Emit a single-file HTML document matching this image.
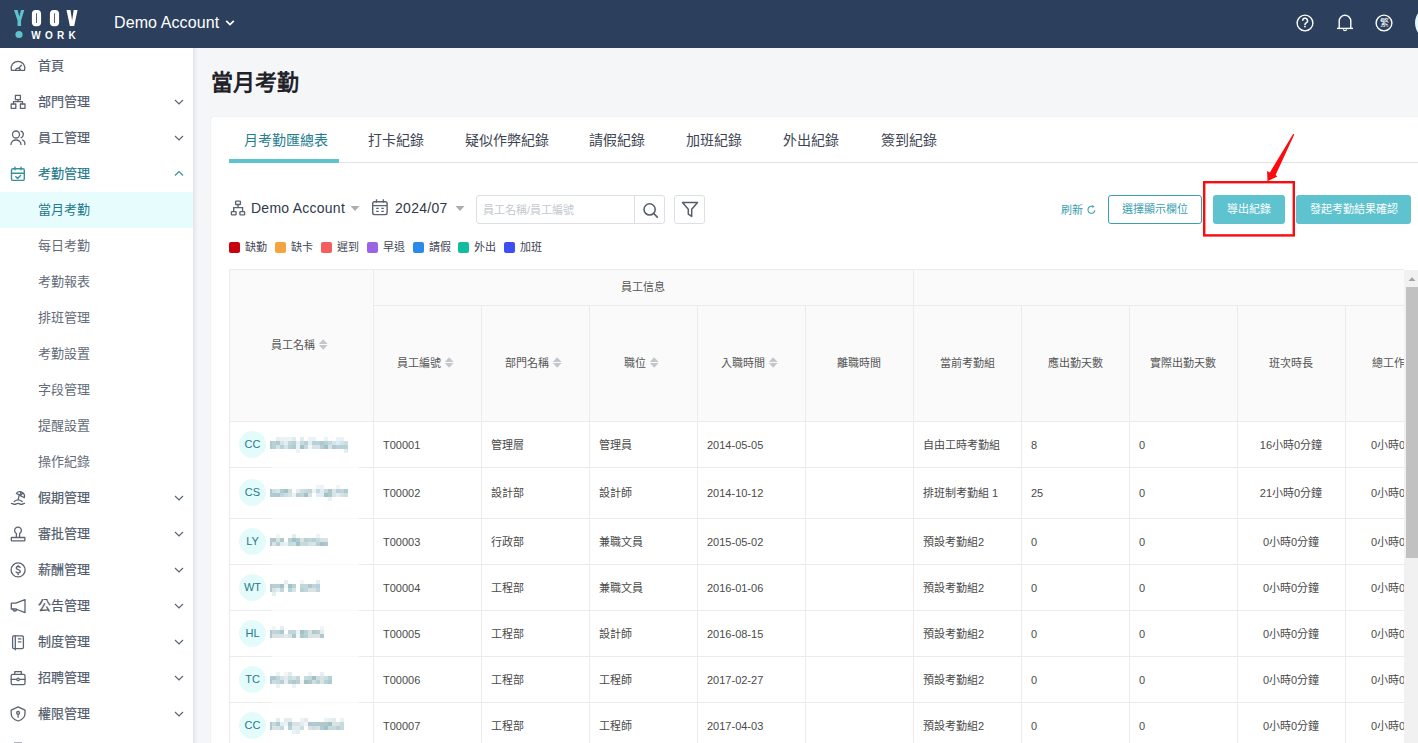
<!DOCTYPE html><html lang="zh-TW"><head><meta charset="utf-8"><style>
*{box-sizing:border-box;margin:0;padding:0}
html,body{width:1418px;height:743px;overflow:hidden}
body{font-family:"Liberation Sans",sans-serif;background:#f5f6f8;position:relative;color:#333}
.abs{position:absolute}
.hdr{position:absolute;left:0;top:0;width:1418px;height:48px;background:#2c3f5c}
.side{position:absolute;left:0;top:48px;width:193px;height:695px;background:#fff}
.sshadow{position:absolute;left:193px;top:48px;width:5px;height:695px;background:linear-gradient(to right,#e3e5e8,#edeef1 50%,#f5f6f8)}
.mi{position:absolute;left:0;width:193px;height:36px;font-size:13px;line-height:36px;color:#646c78;white-space:nowrap}
.mi .t{position:absolute;left:38px;top:0}
.mi.top .t{color:#505a6a;-webkit-text-stroke:0.2px #505a6a}
.mi svg{position:absolute;overflow:visible}
.title{position:absolute;left:211px;top:68px;font-size:22px;font-weight:bold;color:#1f2329;line-height:30px;white-space:nowrap}
.card{position:absolute;left:211px;top:117px;width:1300px;height:700px;background:#fff;border-radius:4px;box-shadow:0 0 2px rgba(0,0,0,.07)}
.tabline{position:absolute;left:229px;top:162px;width:1200px;height:1px;background:#e1e3e8}
.tab{position:absolute;top:131px;font-size:14px;color:#3d4552;line-height:18px;white-space:nowrap}
.tab.act{color:#247e8f}
.uline{position:absolute;left:229px;top:159px;width:110px;height:4px;background:#5ec3ce}
.txt{position:absolute;white-space:nowrap}
.leg{position:absolute;top:242px;width:11px;height:11px;border-radius:2px}
.legt{position:absolute;top:240px;font-size:11px;line-height:14px;color:#3d4552;white-space:nowrap}
.btn{position:absolute;top:195px;height:29px;border-radius:3px;font-size:11px;line-height:29px;text-align:center;white-space:nowrap}
.tb{position:absolute;left:229px;top:269px;width:1175px;height:480px;overflow:hidden}
.cell{position:absolute;font-size:11px;color:#4a4a4a;white-space:nowrap;line-height:14px}
.hl{position:absolute;background:#ebebeb}
</style></head><body>
<div class="hdr">
<svg class="abs" style="left:0;top:0" width="100" height="48" viewBox="0 0 100 48">
<g fill="#5ec3cd"><path d="M14 10h3.6l1.7 6.4 1.7-6.4h3.3l-3.2 10.4V26h-3.6v-5.6z"/><circle cx="19" cy="34.5" r="3.6"/></g>
<g fill="#fff">
<path d="M35.5 10h2c2.2 0 3.6 1.4 3.6 3.8v8.6c0 2.4-1.4 3.8-3.6 3.8h-2c-2.2 0-3.6-1.4-3.6-3.8v-8.6c0-2.4 1.4-3.8 3.6-3.8zm0.6 3.3v9.6h0.8v-9.6z"/>
<path d="M53.5 10h2c2.2 0 3.6 1.4 3.6 3.8v8.6c0 2.4-1.4 3.8-3.6 3.8h-2c-2.2 0-3.6-1.4-3.6-3.8v-8.6c0-2.4 1.4-3.8 3.6-3.8zm0.6 3.3v9.6h0.8v-9.6z"/>
<path d="M66.5 10h4l1.6 10.5 1.6-10.5h3.9l-3.4 16h-4.3z"/>
</g>
<text x="31.2" y="38.8" font-family="Liberation Sans" font-weight="bold" font-size="10" fill="#fff" letter-spacing="4.3">WORK</text>
</svg>
<div class="txt" style="left:114px;top:14px;font-size:16px;line-height:18px;color:#fff;letter-spacing:.1px">Demo Account</div>
<svg class="abs" style="left:225px;top:19px" width="10" height="8"><path d="M1.2 1.8l3.8 3.8 3.8-3.8" fill="none" stroke="#fff" stroke-width="1.7"/></svg>
<svg class="abs" style="left:1290px;top:8px" width="128" height="32" viewBox="1290 8 128 32">
<circle cx="1305" cy="23" r="7.9" fill="none" stroke="#fff" stroke-width="1.4"/>
<path d="M1302.7 20.7a2.4 2.4 0 1 1 3.5 2.1c-.8.5-1.2 1-1.2 1.9v.5" fill="none" stroke="#fff" stroke-width="1.5"/><circle cx="1305" cy="26.6" r=".9" fill="#fff"/>
<path d="M1339.2 28.4v-7.4a5.8 5.8 0 0 1 11.6 0v7.4" fill="none" stroke="#fff" stroke-width="1.4"/>
<path d="M1337 28.4h16" stroke="#fff" stroke-width="1.4"/>
<path d="M1343.5 29.2a1.5 1.5 0 0 0 3 0" fill="none" stroke="#fff" stroke-width="1.2"/>
<circle cx="1384" cy="23" r="7.9" fill="none" stroke="#fff" stroke-width="1.4"/>
<text x="1384" y="26.3" text-anchor="middle" font-size="9" fill="#fff">繁</text>
<circle cx="1432" cy="23" r="17" fill="#e3f8fa"/>
</svg>
</div>
<div class="side"></div><div class="sshadow"></div>
<div class="mi top" style="top:48px"><span class="t" style="top:0px">首頁</span>
</div>
<div class="mi top" style="top:84px"><span class="t" style="top:0px">部門管理</span>
<svg style="left:174px;top:15px" width="10" height="7"><path d="M1 1l4 4 4-4" fill="none" stroke="#5b6472" stroke-width="1.2"/></svg>
</div>
<div class="mi top" style="top:120px"><span class="t" style="top:0px">員工管理</span>
<svg style="left:174px;top:15px" width="10" height="7"><path d="M1 1l4 4 4-4" fill="none" stroke="#5b6472" stroke-width="1.2"/></svg>
</div>
<div class="mi top" style="top:156px"><span class="t" style="top:0px;color:#23798a;-webkit-text-stroke-color:#23798a">考勤管理</span>
<svg style="left:174px;top:14px" width="10" height="7"><path d="M1 5.5l4-4 4 4" fill="none" stroke="#3a8f9c" stroke-width="1.2"/></svg>
</div>
<div class="mi" style="top:192px;background:#e7fdfd"><span class="t" style="top:0px;color:#23798a">當月考勤</span>
</div>
<div class="mi" style="top:228px"><span class="t" style="top:0px">每日考勤</span>
</div>
<div class="mi" style="top:264px"><span class="t" style="top:0px">考勤報表</span>
</div>
<div class="mi" style="top:300px"><span class="t" style="top:0px">排班管理</span>
</div>
<div class="mi" style="top:336px"><span class="t" style="top:0px">考勤設置</span>
</div>
<div class="mi" style="top:372px"><span class="t" style="top:0px">字段管理</span>
</div>
<div class="mi" style="top:408px"><span class="t" style="top:0px">提醒設置</span>
</div>
<div class="mi" style="top:444px"><span class="t" style="top:0px">操作紀錄</span>
</div>
<div class="mi top" style="top:480px"><span class="t" style="top:0px">假期管理</span>
<svg style="left:174px;top:15px" width="10" height="7"><path d="M1 1l4 4 4-4" fill="none" stroke="#5b6472" stroke-width="1.2"/></svg>
</div>
<div class="mi top" style="top:516px"><span class="t" style="top:0px">審批管理</span>
<svg style="left:174px;top:15px" width="10" height="7"><path d="M1 1l4 4 4-4" fill="none" stroke="#5b6472" stroke-width="1.2"/></svg>
</div>
<div class="mi top" style="top:552px"><span class="t" style="top:0px">薪酬管理</span>
<svg style="left:174px;top:15px" width="10" height="7"><path d="M1 1l4 4 4-4" fill="none" stroke="#5b6472" stroke-width="1.2"/></svg>
</div>
<div class="mi top" style="top:588px"><span class="t" style="top:0px">公告管理</span>
<svg style="left:174px;top:15px" width="10" height="7"><path d="M1 1l4 4 4-4" fill="none" stroke="#5b6472" stroke-width="1.2"/></svg>
</div>
<div class="mi top" style="top:624px"><span class="t" style="top:0px">制度管理</span>
<svg style="left:174px;top:15px" width="10" height="7"><path d="M1 1l4 4 4-4" fill="none" stroke="#5b6472" stroke-width="1.2"/></svg>
</div>
<div class="mi top" style="top:660px"><span class="t" style="top:0px">招聘管理</span>
<svg style="left:174px;top:15px" width="10" height="7"><path d="M1 1l4 4 4-4" fill="none" stroke="#5b6472" stroke-width="1.2"/></svg>
</div>
<div class="mi top" style="top:696px"><span class="t" style="top:0px">權限管理</span>
<svg style="left:174px;top:15px" width="10" height="7"><path d="M1 1l4 4 4-4" fill="none" stroke="#5b6472" stroke-width="1.2"/></svg>
</div>
<div class="mi top" style="top:732px"><span class="t" style="top:0px"></span>
</div>
<svg class="abs" style="left:0;top:0" width="40" height="743"><path d="M11.4 70.3h13.2a6.9 6.9 0 1 0-13.2 0z" fill="none" stroke="#5b6472" stroke-width="1.3" stroke-linecap="round" stroke-linejoin="round"/><path d="M15.6 70.3a2.4 2.2 0 0 1 4.8 0M18.6 68.4l2.8-3.2" fill="none" stroke="#5b6472" stroke-width="1.3" stroke-linecap="round" stroke-linejoin="round"/><rect x="15.4" y="95.3" width="5" height="4.4" fill="none" stroke="#5b6472" stroke-width="1.3" stroke-linecap="round" stroke-linejoin="round"/><rect x="11.2" y="104" width="4.6" height="4.4" fill="none" stroke="#5b6472" stroke-width="1.3" stroke-linecap="round" stroke-linejoin="round"/><rect x="20.4" y="104" width="4.6" height="4.4" fill="none" stroke="#5b6472" stroke-width="1.3" stroke-linecap="round" stroke-linejoin="round"/><path d="M18 99.7v2M13.5 104v-2.3h9v2.3" fill="none" stroke="#5b6472" stroke-width="1.3" stroke-linecap="round" stroke-linejoin="round"/><circle cx="16" cy="134.5" r="3.5" fill="none" stroke="#5b6472" stroke-width="1.3" stroke-linecap="round" stroke-linejoin="round"/><path d="M21 131.2a3.5 3.5 0 0 1 0 6.6M11 144.5a5 4.5 0 0 1 10 0M22.5 140a3.8 4 0 0 1 2.3 4.5" fill="none" stroke="#5b6472" stroke-width="1.3" stroke-linecap="round" stroke-linejoin="round"/><rect x="11.5" y="168.8" width="12.8" height="11.6" rx="1.5" fill="none" stroke="#3a8f9c" stroke-width="1.4" stroke-linecap="round" stroke-linejoin="round"/><path d="M11.5 173.3h12.8M15 167.2v2.6M21 167.2v2.6M15.8 176.8l1.8 1.6 3-3" fill="none" stroke="#3a8f9c" stroke-width="1.4" stroke-linecap="round" stroke-linejoin="round"/><path d="M16.4 493.4A4.6 4.6 0 0 1 24.3 497.7z" fill="none" stroke="#5b6472" stroke-width="1.3" stroke-linecap="round" stroke-linejoin="round"/><path d="M20.3 495.5l.5-3.6M20.3 495.5l2.4-2.2M19.3 495.2l-1.2 4.5M14.2 501.5Q18.2 498.3 22.2 501.5M11.4 503.3c1.3 0 2 1.1 3.3 1.1s2-1.1 3.3-1.1 2 1.1 3.3 1.1 2-1.1 3.3-1.1" fill="none" stroke="#5b6472" stroke-width="1.3" stroke-linecap="round" stroke-linejoin="round"/><path d="M16.4 537.4v-3.9a3.4 3.4 0 1 1 3.2 0v3.9" fill="none" stroke="#5b6472" stroke-width="1.3" stroke-linecap="round" stroke-linejoin="round"/><rect x="11.3" y="537.5" width="13.6" height="3.3" rx=".6" fill="none" stroke="#5b6472" stroke-width="1.3" stroke-linecap="round" stroke-linejoin="round"/><circle cx="18.1" cy="569.9" r="7" fill="none" stroke="#5b6472" stroke-width="1.3" stroke-linecap="round" stroke-linejoin="round"/><path d="M20.2 567.4c-.4-.6-1.1-.9-2-.9-1.1 0-2 .6-2 1.5s.9 1.3 2 1.6 2.1.7 2.1 1.7-.9 1.6-2.1 1.6c-.9 0-1.6-.4-2.1-1M18.1 565.4v1.1M18.1 573.4v1.1" fill="none" stroke="#5b6472" stroke-width="1.3" stroke-linecap="round" stroke-linejoin="round"/><path d="M11.3 603.2h4.4l9.3-3.6v13l-9.3-3.6h-4.4z" fill="none" stroke="#5b6472" stroke-width="1.3" stroke-linecap="round" stroke-linejoin="round"/><path d="M12.9 609.1a1.9 1.9 0 0 0 3.8 0" fill="none" stroke="#5b6472" stroke-width="1.3" stroke-linecap="round" stroke-linejoin="round"/><rect x="12.6" y="635.9" width="10.8" height="12.7" rx="1.3" fill="none" stroke="#5b6472" stroke-width="1.3" stroke-linecap="round" stroke-linejoin="round"/><path d="M15.3 635.9v13.9M18.4 638.9h2.5M18.4 641.8h2.5" fill="none" stroke="#5b6472" stroke-width="1.3" stroke-linecap="round" stroke-linejoin="round"/><rect x="11.2" y="674.3" width="13.8" height="10.3" rx="1.4" fill="none" stroke="#5b6472" stroke-width="1.3" stroke-linecap="round" stroke-linejoin="round"/><path d="M14.8 674.3v-2.7h6.5v2.7M11.2 679.4h13.8" fill="none" stroke="#5b6472" stroke-width="1.3" stroke-linecap="round" stroke-linejoin="round"/><circle cx="18.1" cy="679.4" r="1.2" fill="#fff" stroke="#5b6472" stroke-width="1.3" stroke-linecap="round" stroke-linejoin="round"/><path d="M18.1 706.9L25 710.2v3.4c0 3.7-3.1 6.3-6.9 7.4-3.8-1.1-6.9-3.7-6.9-7.4v-3.4z" fill="none" stroke="#5b6472" stroke-width="1.3" stroke-linecap="round" stroke-linejoin="round"/><circle cx="18.1" cy="712.9" r="1.4" fill="none" stroke="#5b6472" stroke-width="1.3" stroke-linecap="round" stroke-linejoin="round"/><path d="M18.1 714.4v2.8" fill="none" stroke="#5b6472" stroke-width="1.3" stroke-linecap="round" stroke-linejoin="round"/><path d="M14 742.7h8" stroke="#aab0b8" stroke-width="1.3"/></svg>
<div class="title">當月考勤</div>
<div class="card"></div>
<div class="tabline"></div>
<div class="tab act" style="left:244px">月考勤匯總表</div>
<div class="tab" style="left:368px">打卡紀錄</div>
<div class="tab" style="left:465px">疑似作弊紀錄</div>
<div class="tab" style="left:589px">請假紀錄</div>
<div class="tab" style="left:686px">加班紀錄</div>
<div class="tab" style="left:783px">外出紀錄</div>
<div class="tab" style="left:881px">簽到紀錄</div>
<div class="uline"></div>
<svg class="abs" style="left:229px;top:199px" width="18" height="18" viewBox="229 199 18 18"><g fill="none" stroke="#5b6472" stroke-width="1.35"><rect x="235.6" y="201.1" width="4.8" height="3.4" rx=".6"/><rect x="231.4" y="211.6" width="4.7" height="3.2" rx=".6"/><rect x="239.9" y="211.6" width="4.7" height="3.2" rx=".6"/><path d="M238 204.5v3.1M233.7 211.6v-4h8.9v4"/></g></svg>
<div class="txt" style="left:251px;top:200px;font-size:14px;line-height:16px;color:#30394a;letter-spacing:.25px">Demo Account</div>
<svg class="abs" style="left:349px;top:205px" width="12" height="7"><path d="M1.5 1h9l-4.5 5z" fill="#a9aeb8"/></svg>
<svg class="abs" style="left:371px;top:199px" width="18" height="18" viewBox="371 199 18 18"><rect x="372.7" y="201.8" width="14.4" height="12.8" rx="1.8" fill="none" stroke="#5b6472" stroke-width="1.4"/><path d="M372.7 205.6h14.4M376.5 199.3v3.4M383.3 199.3v3.4M376.2 208.4h2.5M381.3 208.4h2.5M376.2 211.4h2.5M381.3 211.4h2.5" fill="none" stroke="#5b6472" stroke-width="1.3"/></svg>
<div class="txt" style="left:395px;top:200px;font-size:14px;line-height:16px;color:#30394a;letter-spacing:.3px">2024/07</div>
<svg class="abs" style="left:454px;top:205px" width="12" height="7"><path d="M1.5 1h9l-4.5 5z" fill="#a9aeb8"/></svg>
<div class="abs" style="left:476px;top:195px;width:189px;height:29px;border:1px solid #dcdfe6;border-radius:3px"></div>
<div class="abs" style="left:634px;top:196px;width:1px;height:27px;background:#dcdfe6"></div>
<div class="txt" style="left:483px;top:203px;font-size:11px;line-height:14px;color:#c3c7cf">員工名稱/員工編號</div>
<svg class="abs" style="left:640px;top:200px" width="20" height="20" viewBox="640 200 20 20"><circle cx="649.6" cy="209.4" r="5.6" fill="none" stroke="#555d6b" stroke-width="1.5"/><path d="M653.7 213.5l3.6 3.6" stroke="#555d6b" stroke-width="1.6" stroke-linecap="round"/></svg>
<div class="abs" style="left:674px;top:195px;width:31px;height:29px;border:1px solid #dcdfe6;border-radius:3px"></div>
<svg class="abs" style="left:680px;top:200px" width="20" height="20" viewBox="680 200 20 20"><path d="M682.5 202.6h15l-5.8 6.6v7.2l-3.4-2.2v-5z" fill="none" stroke="#555d6b" stroke-width="1.5" stroke-linejoin="round"/></svg>
<div class="leg" style="left:229px;background:#c9000d"></div><div class="legt" style="left:245px">缺勤</div>
<div class="leg" style="left:275px;background:#f5a33f"></div><div class="legt" style="left:291px">缺卡</div>
<div class="leg" style="left:321px;background:#f45d5d"></div><div class="legt" style="left:337px">遲到</div>
<div class="leg" style="left:367px;background:#9b62e6"></div><div class="legt" style="left:383px">早退</div>
<div class="leg" style="left:413px;background:#2b8ae9"></div><div class="legt" style="left:429px">請假</div>
<div class="leg" style="left:458px;background:#13bc9c"></div><div class="legt" style="left:474px">外出</div>
<div class="leg" style="left:504px;background:#3c50f2"></div><div class="legt" style="left:520px">加班</div>
<div class="txt" style="left:1061px;top:203px;font-size:11px;line-height:14px;color:#3b9db0">刷新</div>
<svg class="abs" style="left:1086px;top:203px" width="12" height="12" viewBox="1086 203 12 12"><path d="M1092.3 206.4A3.5 3.5 0 1 0 1094.9 210.4" fill="none" stroke="#3b9db0" stroke-width="1.1"/><path d="M1092.2 204.9l2.3 1.5-2.3 1.5z" fill="#3b9db0"/></svg>
<div class="btn" style="left:1108px;width:94px;border:1px solid #3c9fb1;color:#3c9fb1;line-height:27px">選擇顯示欄位</div>
<div class="btn" style="left:1213px;width:72px;background:#5ec3ce;color:#fff">導出紀錄</div>
<div class="btn" style="left:1296px;width:115px;background:#5ec3ce;color:#fff">發起考勤結果確認</div>
<svg class="abs" style="left:1190px;top:120px" width="228" height="130" viewBox="1190 120 228 130"><rect x="1204.2" y="182.2" width="89.6" height="53.2" fill="none" stroke="#fb0a0e" stroke-width="2.4"/><path d="M1293.1 133.9L1294.3 134.6L1275.6 174.9L1277.4 176.4L1267.5 181.2L1267.1 171.1L1269.9 172.5z" fill="#fb0a0e"/></svg>
<div class="tb">
<div class="abs" style="left:0;top:0;width:1200px;height:152px;background:#fafafa"></div>
<div class="hl" style="left:0;top:0;width:1200px;height:1px"></div>
<div class="hl" style="left:0;top:0;width:1px;height:480px"></div>
<div class="hl" style="left:144px;top:36px;width:1100px;height:1px"></div>
<div class="hl" style="left:0;top:152px;width:1200px;height:1px"></div>
<div class="hl" style="left:0;top:198px;width:1200px;height:1px"></div>
<div class="hl" style="left:0;top:249px;width:1200px;height:1px"></div>
<div class="hl" style="left:0;top:295px;width:1200px;height:1px"></div>
<div class="hl" style="left:0;top:341px;width:1200px;height:1px"></div>
<div class="hl" style="left:0;top:387px;width:1200px;height:1px"></div>
<div class="hl" style="left:0;top:433px;width:1200px;height:1px"></div>
<div class="hl" style="left:0;top:479px;width:1200px;height:1px"></div>
<div class="hl" style="left:144px;top:0px;width:1px;height:480px"></div>
<div class="hl" style="left:252px;top:36px;width:1px;height:480px"></div>
<div class="hl" style="left:360px;top:36px;width:1px;height:480px"></div>
<div class="hl" style="left:468px;top:36px;width:1px;height:480px"></div>
<div class="hl" style="left:576px;top:36px;width:1px;height:480px"></div>
<div class="hl" style="left:684px;top:0px;width:1px;height:480px"></div>
<div class="hl" style="left:792px;top:36px;width:1px;height:480px"></div>
<div class="hl" style="left:900px;top:36px;width:1px;height:480px"></div>
<div class="hl" style="left:1008px;top:36px;width:1px;height:480px"></div>
<div class="hl" style="left:1116px;top:36px;width:1px;height:480px"></div>
<div class="hl" style="left:1224px;top:36px;width:1px;height:480px"></div>
<div class="cell" style="left:0px;width:144px;top:69px;text-align:center;color:#555">員工名稱<svg width="16" height="11" style="display:inline-block;vertical-align:-1px"><path d="M8.2 0.3l4.4 4.6h-8.8z" fill="#c3c6cd"/><path d="M8.2 10.7l4.4-4.6h-8.8z" fill="#c3c6cd"/></svg></div>
<div class="cell" style="left:144px;width:540px;top:11px;text-align:center;color:#555">員工信息</div>
<div class="cell" style="left:144px;width:108px;top:87px;text-align:center;color:#555">員工編號<svg width="16" height="11" style="display:inline-block;vertical-align:-1px"><path d="M8.2 0.3l4.4 4.6h-8.8z" fill="#c3c6cd"/><path d="M8.2 10.7l4.4-4.6h-8.8z" fill="#c3c6cd"/></svg></div>
<div class="cell" style="left:252px;width:108px;top:87px;text-align:center;color:#555">部門名稱<svg width="16" height="11" style="display:inline-block;vertical-align:-1px"><path d="M8.2 0.3l4.4 4.6h-8.8z" fill="#c3c6cd"/><path d="M8.2 10.7l4.4-4.6h-8.8z" fill="#c3c6cd"/></svg></div>
<div class="cell" style="left:360px;width:108px;top:87px;text-align:center;color:#555">職位<svg width="16" height="11" style="display:inline-block;vertical-align:-1px"><path d="M8.2 0.3l4.4 4.6h-8.8z" fill="#c3c6cd"/><path d="M8.2 10.7l4.4-4.6h-8.8z" fill="#c3c6cd"/></svg></div>
<div class="cell" style="left:468px;width:108px;top:87px;text-align:center;color:#555">入職時間<svg width="16" height="11" style="display:inline-block;vertical-align:-1px"><path d="M8.2 0.3l4.4 4.6h-8.8z" fill="#c3c6cd"/><path d="M8.2 10.7l4.4-4.6h-8.8z" fill="#c3c6cd"/></svg></div>
<div class="cell" style="left:576px;width:108px;top:87px;text-align:center;color:#555">離職時間</div>
<div class="cell" style="left:684px;width:108px;top:87px;text-align:center;color:#555">當前考勤組</div>
<div class="cell" style="left:792px;width:108px;top:87px;text-align:center;color:#555">應出勤天數</div>
<div class="cell" style="left:900px;width:108px;top:87px;text-align:center;color:#555">實際出勤天數</div>
<div class="cell" style="left:1008px;width:108px;top:87px;text-align:center;color:#555">班次時長</div>
<div class="cell" style="left:1116px;width:108px;top:87px;text-align:center;color:#555">總工作時長</div>
<div class="abs" style="left:10px;top:162px;width:27px;height:27px;border-radius:50%;background:#e4fbfb;color:#237a8a;font-size:11px;line-height:27px;text-align:center">CC</div>
<div class="abs" style="left:0;top:0;filter:blur(0.35px);opacity:.85"><div class="abs" style="left:41px;top:172px;width:1.5px;height:8px;background:#4f8aa0;opacity:.55"></div><div class="abs" style="left:47px;top:168px;width:4px;height:4px;background:#e1edf1"></div><div class="abs" style="left:51px;top:168px;width:4px;height:4px;background:#e9f2f5"></div><div class="abs" style="left:55px;top:168px;width:4px;height:4px;background:#e9f2f5"></div><div class="abs" style="left:59px;top:168px;width:4px;height:4px;background:#e9f2f5"></div><div class="abs" style="left:63px;top:168px;width:4px;height:4px;background:#dde9ed"></div><div class="abs" style="left:71px;top:168px;width:4px;height:4px;background:#dde9ed"></div><div class="abs" style="left:79px;top:168px;width:4px;height:4px;background:#e9f2f5"></div><div class="abs" style="left:83px;top:168px;width:4px;height:4px;background:#e6f0f3"></div><div class="abs" style="left:95px;top:168px;width:4px;height:4px;background:#e9f2f5"></div><div class="abs" style="left:107px;top:168px;width:4px;height:4px;background:#e6f0f3"></div><div class="abs" style="left:111px;top:168px;width:4px;height:4px;background:#e6f0f3"></div><div class="abs" style="left:43px;top:172px;width:4px;height:4px;background:#a6cdd8"></div><div class="abs" style="left:47px;top:172px;width:4px;height:4px;background:#9ec3cb"></div><div class="abs" style="left:51px;top:172px;width:4px;height:4px;background:#d5dedd"></div><div class="abs" style="left:55px;top:172px;width:4px;height:4px;background:#dcebf0"></div><div class="abs" style="left:59px;top:172px;width:4px;height:4px;background:#b6d0d5"></div><div class="abs" style="left:63px;top:172px;width:4px;height:4px;background:#a9cbd2"></div><div class="abs" style="left:67px;top:172px;width:4px;height:4px;background:#e1edf1"></div><div class="abs" style="left:71px;top:172px;width:4px;height:4px;background:#bcd4d8"></div><div class="abs" style="left:75px;top:172px;width:4px;height:4px;background:#aec7ca"></div><div class="abs" style="left:79px;top:172px;width:4px;height:4px;background:#e1edf1"></div><div class="abs" style="left:83px;top:172px;width:4px;height:4px;background:#a9cbd2"></div><div class="abs" style="left:87px;top:172px;width:4px;height:4px;background:#a6cdd8"></div><div class="abs" style="left:91px;top:172px;width:4px;height:4px;background:#a3bfc4"></div><div class="abs" style="left:95px;top:172px;width:4px;height:4px;background:#a6cdd8"></div><div class="abs" style="left:99px;top:172px;width:4px;height:4px;background:#bcd4d8"></div><div class="abs" style="left:103px;top:172px;width:4px;height:4px;background:#cfe0e3"></div><div class="abs" style="left:107px;top:172px;width:4px;height:4px;background:#dcebf0"></div><div class="abs" style="left:111px;top:172px;width:4px;height:4px;background:#d5dedd"></div><div class="abs" style="left:115px;top:172px;width:4px;height:4px;background:#c3d9dd"></div><div class="abs" style="left:43px;top:176px;width:4px;height:4px;background:#aec7ca"></div><div class="abs" style="left:47px;top:176px;width:4px;height:4px;background:#cfe0e3"></div><div class="abs" style="left:51px;top:176px;width:4px;height:4px;background:#a6cdd8"></div><div class="abs" style="left:55px;top:176px;width:4px;height:4px;background:#cfe0e3"></div><div class="abs" style="left:59px;top:176px;width:4px;height:4px;background:#aec7ca"></div><div class="abs" style="left:63px;top:176px;width:4px;height:4px;background:#9ec3cb"></div><div class="abs" style="left:67px;top:176px;width:4px;height:4px;background:#e6f0f3"></div><div class="abs" style="left:71px;top:176px;width:4px;height:4px;background:#93b8bf"></div><div class="abs" style="left:75px;top:176px;width:4px;height:4px;background:#bcd4d8"></div><div class="abs" style="left:79px;top:176px;width:4px;height:4px;background:#eef5f7"></div><div class="abs" style="left:83px;top:176px;width:4px;height:4px;background:#d5dedd"></div><div class="abs" style="left:87px;top:176px;width:4px;height:4px;background:#cfe0e3"></div><div class="abs" style="left:91px;top:176px;width:4px;height:4px;background:#aec7ca"></div><div class="abs" style="left:95px;top:176px;width:4px;height:4px;background:#93b8bf"></div><div class="abs" style="left:99px;top:176px;width:4px;height:4px;background:#cfe0e3"></div><div class="abs" style="left:103px;top:176px;width:4px;height:4px;background:#9ec3cb"></div><div class="abs" style="left:107px;top:176px;width:4px;height:4px;background:#a6cdd8"></div><div class="abs" style="left:111px;top:176px;width:4px;height:4px;background:#a9cbd2"></div><div class="abs" style="left:115px;top:176px;width:4px;height:4px;background:#a9cbd2"></div><div class="abs" style="left:67px;top:180px;width:4px;height:4px;background:#e9f2f5"></div><div class="abs" style="left:115px;top:180px;width:4px;height:4px;background:#e1edf1"></div></div>
<div class="abs" style="left:43px;top:198px;width:87px;height:1px;background:#f9f9f9"></div>
<div class="cell" style="left:154px;top:169px">T00001</div>
<div class="cell" style="left:262px;top:169px">管理層</div>
<div class="cell" style="left:370px;top:169px">管理員</div>
<div class="cell" style="left:478px;top:169px">2014-05-05</div>
<div class="cell" style="left:586px;top:169px"></div>
<div class="cell" style="left:694px;top:169px">自由工時考勤組</div>
<div class="cell" style="left:802px;top:169px">8</div>
<div class="cell" style="left:910px;top:169px">0</div>
<div class="cell" style="left:1008px;width:108px;text-align:center;top:169px">16小時0分鐘</div>
<div class="cell" style="left:1116px;width:108px;text-align:center;top:169px">0小時0分鐘</div>
<div class="abs" style="left:10px;top:210px;width:27px;height:27px;border-radius:50%;background:#e4fbfb;color:#237a8a;font-size:11px;line-height:27px;text-align:center">CS</div>
<div class="abs" style="left:0;top:0;filter:blur(0.35px);opacity:.85"><div class="abs" style="left:41px;top:220px;width:1.5px;height:8px;background:#4f8aa0;opacity:.55"></div><div class="abs" style="left:87px;top:216px;width:4px;height:4px;background:#eef5f7"></div><div class="abs" style="left:91px;top:216px;width:4px;height:4px;background:#e6f0f3"></div><div class="abs" style="left:107px;top:216px;width:4px;height:4px;background:#f2f4f3"></div><div class="abs" style="left:43px;top:220px;width:4px;height:4px;background:#c3d9dd"></div><div class="abs" style="left:47px;top:220px;width:4px;height:4px;background:#d5dedd"></div><div class="abs" style="left:51px;top:220px;width:4px;height:4px;background:#9ec3cb"></div><div class="abs" style="left:55px;top:220px;width:4px;height:4px;background:#93b8bf"></div><div class="abs" style="left:59px;top:220px;width:4px;height:4px;background:#c3d9dd"></div><div class="abs" style="left:67px;top:220px;width:4px;height:4px;background:#dcebf0"></div><div class="abs" style="left:71px;top:220px;width:4px;height:4px;background:#c3d9dd"></div><div class="abs" style="left:75px;top:220px;width:4px;height:4px;background:#bcd4d8"></div><div class="abs" style="left:79px;top:220px;width:4px;height:4px;background:#b6d0d5"></div><div class="abs" style="left:83px;top:220px;width:4px;height:4px;background:#e6f0f3"></div><div class="abs" style="left:87px;top:220px;width:4px;height:4px;background:#bcd4d8"></div><div class="abs" style="left:91px;top:220px;width:4px;height:4px;background:#dcebf0"></div><div class="abs" style="left:95px;top:220px;width:4px;height:4px;background:#bcd4d8"></div><div class="abs" style="left:99px;top:220px;width:4px;height:4px;background:#a3bfc4"></div><div class="abs" style="left:103px;top:220px;width:4px;height:4px;background:#cfe0e3"></div><div class="abs" style="left:107px;top:220px;width:4px;height:4px;background:#a6cdd8"></div><div class="abs" style="left:111px;top:220px;width:4px;height:4px;background:#b6d0d5"></div><div class="abs" style="left:115px;top:220px;width:4px;height:4px;background:#9ec3cb"></div><div class="abs" style="left:43px;top:224px;width:4px;height:4px;background:#9ec3cb"></div><div class="abs" style="left:47px;top:224px;width:4px;height:4px;background:#a3bfc4"></div><div class="abs" style="left:51px;top:224px;width:4px;height:4px;background:#b6d0d5"></div><div class="abs" style="left:55px;top:224px;width:4px;height:4px;background:#c3d9dd"></div><div class="abs" style="left:59px;top:224px;width:4px;height:4px;background:#d5dedd"></div><div class="abs" style="left:63px;top:224px;width:4px;height:4px;background:#e9f2f5"></div><div class="abs" style="left:67px;top:224px;width:4px;height:4px;background:#aec7ca"></div><div class="abs" style="left:71px;top:224px;width:4px;height:4px;background:#b6d0d5"></div><div class="abs" style="left:75px;top:224px;width:4px;height:4px;background:#93b8bf"></div><div class="abs" style="left:79px;top:224px;width:4px;height:4px;background:#d5dedd"></div><div class="abs" style="left:87px;top:224px;width:4px;height:4px;background:#dcebf0"></div><div class="abs" style="left:91px;top:224px;width:4px;height:4px;background:#dcebf0"></div><div class="abs" style="left:95px;top:224px;width:4px;height:4px;background:#93b8bf"></div><div class="abs" style="left:99px;top:224px;width:4px;height:4px;background:#a3bfc4"></div><div class="abs" style="left:103px;top:224px;width:4px;height:4px;background:#cfe0e3"></div><div class="abs" style="left:107px;top:224px;width:4px;height:4px;background:#dcebf0"></div><div class="abs" style="left:111px;top:224px;width:4px;height:4px;background:#d5dedd"></div><div class="abs" style="left:115px;top:224px;width:4px;height:4px;background:#c3d9dd"></div><div class="abs" style="left:99px;top:228px;width:4px;height:4px;background:#e6f0f3"></div></div>
<div class="abs" style="left:43px;top:249px;width:87px;height:1px;background:#f9f9f9"></div>
<div class="cell" style="left:154px;top:217px">T00002</div>
<div class="cell" style="left:262px;top:217px">設計部</div>
<div class="cell" style="left:370px;top:217px">設計師</div>
<div class="cell" style="left:478px;top:217px">2014-10-12</div>
<div class="cell" style="left:586px;top:217px"></div>
<div class="cell" style="left:694px;top:217px">排班制考勤組 1</div>
<div class="cell" style="left:802px;top:217px">25</div>
<div class="cell" style="left:910px;top:217px">0</div>
<div class="cell" style="left:1008px;width:108px;text-align:center;top:217px">21小時0分鐘</div>
<div class="cell" style="left:1116px;width:108px;text-align:center;top:217px">0小時0分鐘</div>
<div class="abs" style="left:10px;top:259px;width:27px;height:27px;border-radius:50%;background:#e4fbfb;color:#237a8a;font-size:11px;line-height:27px;text-align:center">LY</div>
<div class="abs" style="left:0;top:0;filter:blur(0.35px);opacity:.85"><div class="abs" style="left:41px;top:269px;width:1.5px;height:8px;background:#4f8aa0;opacity:.55"></div><div class="abs" style="left:47px;top:265px;width:4px;height:4px;background:#f2f4f3"></div><div class="abs" style="left:63px;top:265px;width:4px;height:4px;background:#dde9ed"></div><div class="abs" style="left:87px;top:265px;width:4px;height:4px;background:#e9f2f5"></div><div class="abs" style="left:43px;top:269px;width:4px;height:4px;background:#a3bfc4"></div><div class="abs" style="left:47px;top:269px;width:4px;height:4px;background:#d5dedd"></div><div class="abs" style="left:51px;top:269px;width:4px;height:4px;background:#9ec3cb"></div><div class="abs" style="left:59px;top:269px;width:4px;height:4px;background:#a9cbd2"></div><div class="abs" style="left:63px;top:269px;width:4px;height:4px;background:#93b8bf"></div><div class="abs" style="left:67px;top:269px;width:4px;height:4px;background:#9ec3cb"></div><div class="abs" style="left:71px;top:269px;width:4px;height:4px;background:#d5dedd"></div><div class="abs" style="left:75px;top:269px;width:4px;height:4px;background:#aec7ca"></div><div class="abs" style="left:79px;top:269px;width:4px;height:4px;background:#b6d0d5"></div><div class="abs" style="left:83px;top:269px;width:4px;height:4px;background:#aec7ca"></div><div class="abs" style="left:87px;top:269px;width:4px;height:4px;background:#bcd4d8"></div><div class="abs" style="left:91px;top:269px;width:4px;height:4px;background:#d5dedd"></div><div class="abs" style="left:95px;top:269px;width:4px;height:4px;background:#d5dedd"></div><div class="abs" style="left:43px;top:273px;width:4px;height:4px;background:#d5dedd"></div><div class="abs" style="left:47px;top:273px;width:4px;height:4px;background:#aec7ca"></div><div class="abs" style="left:51px;top:273px;width:4px;height:4px;background:#dcebf0"></div><div class="abs" style="left:55px;top:273px;width:4px;height:4px;background:#e6f0f3"></div><div class="abs" style="left:59px;top:273px;width:4px;height:4px;background:#bcd4d8"></div><div class="abs" style="left:63px;top:273px;width:4px;height:4px;background:#c3d9dd"></div><div class="abs" style="left:67px;top:273px;width:4px;height:4px;background:#93b8bf"></div><div class="abs" style="left:71px;top:273px;width:4px;height:4px;background:#bcd4d8"></div><div class="abs" style="left:75px;top:273px;width:4px;height:4px;background:#bcd4d8"></div><div class="abs" style="left:79px;top:273px;width:4px;height:4px;background:#d5dedd"></div><div class="abs" style="left:83px;top:273px;width:4px;height:4px;background:#cfe0e3"></div><div class="abs" style="left:87px;top:273px;width:4px;height:4px;background:#aec7ca"></div><div class="abs" style="left:91px;top:273px;width:4px;height:4px;background:#93b8bf"></div><div class="abs" style="left:95px;top:273px;width:4px;height:4px;background:#a3bfc4"></div></div>
<div class="abs" style="left:43px;top:295px;width:87px;height:1px;background:#f9f9f9"></div>
<div class="cell" style="left:154px;top:266px">T00003</div>
<div class="cell" style="left:262px;top:266px">行政部</div>
<div class="cell" style="left:370px;top:266px">兼職文員</div>
<div class="cell" style="left:478px;top:266px">2015-05-02</div>
<div class="cell" style="left:586px;top:266px"></div>
<div class="cell" style="left:694px;top:266px">預設考勤組2</div>
<div class="cell" style="left:802px;top:266px">0</div>
<div class="cell" style="left:910px;top:266px">0</div>
<div class="cell" style="left:1008px;width:108px;text-align:center;top:266px">0小時0分鐘</div>
<div class="cell" style="left:1116px;width:108px;text-align:center;top:266px">0小時0分鐘</div>
<div class="abs" style="left:10px;top:305px;width:27px;height:27px;border-radius:50%;background:#e4fbfb;color:#237a8a;font-size:11px;line-height:27px;text-align:center">WT</div>
<div class="abs" style="left:0;top:0;filter:blur(0.35px);opacity:.85"><div class="abs" style="left:41px;top:315px;width:1.5px;height:8px;background:#4f8aa0;opacity:.55"></div><div class="abs" style="left:55px;top:311px;width:4px;height:4px;background:#e1edf1"></div><div class="abs" style="left:71px;top:311px;width:4px;height:4px;background:#f2f4f3"></div><div class="abs" style="left:87px;top:311px;width:4px;height:4px;background:#e1edf1"></div><div class="abs" style="left:43px;top:315px;width:4px;height:4px;background:#aec7ca"></div><div class="abs" style="left:47px;top:315px;width:4px;height:4px;background:#a9cbd2"></div><div class="abs" style="left:51px;top:315px;width:4px;height:4px;background:#93b8bf"></div><div class="abs" style="left:55px;top:315px;width:4px;height:4px;background:#f2f4f3"></div><div class="abs" style="left:59px;top:315px;width:4px;height:4px;background:#93b8bf"></div><div class="abs" style="left:63px;top:315px;width:4px;height:4px;background:#a9cbd2"></div><div class="abs" style="left:71px;top:315px;width:4px;height:4px;background:#b6d0d5"></div><div class="abs" style="left:75px;top:315px;width:4px;height:4px;background:#b6d0d5"></div><div class="abs" style="left:79px;top:315px;width:4px;height:4px;background:#a3bfc4"></div><div class="abs" style="left:83px;top:315px;width:4px;height:4px;background:#b6d0d5"></div><div class="abs" style="left:87px;top:315px;width:4px;height:4px;background:#a6cdd8"></div><div class="abs" style="left:43px;top:319px;width:4px;height:4px;background:#cfe0e3"></div><div class="abs" style="left:47px;top:319px;width:4px;height:4px;background:#dcebf0"></div><div class="abs" style="left:51px;top:319px;width:4px;height:4px;background:#b6d0d5"></div><div class="abs" style="left:59px;top:319px;width:4px;height:4px;background:#a6cdd8"></div><div class="abs" style="left:63px;top:319px;width:4px;height:4px;background:#cfe0e3"></div><div class="abs" style="left:71px;top:319px;width:4px;height:4px;background:#aec7ca"></div><div class="abs" style="left:75px;top:319px;width:4px;height:4px;background:#b6d0d5"></div><div class="abs" style="left:79px;top:319px;width:4px;height:4px;background:#d5dedd"></div><div class="abs" style="left:83px;top:319px;width:4px;height:4px;background:#d5dedd"></div><div class="abs" style="left:87px;top:319px;width:4px;height:4px;background:#b6d0d5"></div><div class="abs" style="left:43px;top:323px;width:4px;height:4px;background:#e1edf1"></div></div>
<div class="abs" style="left:43px;top:341px;width:87px;height:1px;background:#f9f9f9"></div>
<div class="cell" style="left:154px;top:312px">T00004</div>
<div class="cell" style="left:262px;top:312px">工程部</div>
<div class="cell" style="left:370px;top:312px">兼職文員</div>
<div class="cell" style="left:478px;top:312px">2016-01-06</div>
<div class="cell" style="left:586px;top:312px"></div>
<div class="cell" style="left:694px;top:312px">預設考勤組2</div>
<div class="cell" style="left:802px;top:312px">0</div>
<div class="cell" style="left:910px;top:312px">0</div>
<div class="cell" style="left:1008px;width:108px;text-align:center;top:312px">0小時0分鐘</div>
<div class="cell" style="left:1116px;width:108px;text-align:center;top:312px">0小時0分鐘</div>
<div class="abs" style="left:10px;top:351px;width:27px;height:27px;border-radius:50%;background:#e4fbfb;color:#237a8a;font-size:11px;line-height:27px;text-align:center">HL</div>
<div class="abs" style="left:0;top:0;filter:blur(0.35px);opacity:.85"><div class="abs" style="left:41px;top:361px;width:1.5px;height:8px;background:#4f8aa0;opacity:.55"></div><div class="abs" style="left:43px;top:357px;width:4px;height:4px;background:#f2f4f3"></div><div class="abs" style="left:51px;top:357px;width:4px;height:4px;background:#e1edf1"></div><div class="abs" style="left:91px;top:357px;width:4px;height:4px;background:#f2f4f3"></div><div class="abs" style="left:43px;top:361px;width:4px;height:4px;background:#b6d0d5"></div><div class="abs" style="left:47px;top:361px;width:4px;height:4px;background:#a6cdd8"></div><div class="abs" style="left:51px;top:361px;width:4px;height:4px;background:#a3bfc4"></div><div class="abs" style="left:59px;top:361px;width:4px;height:4px;background:#b6d0d5"></div><div class="abs" style="left:63px;top:361px;width:4px;height:4px;background:#b6d0d5"></div><div class="abs" style="left:67px;top:361px;width:4px;height:4px;background:#e9f2f5"></div><div class="abs" style="left:71px;top:361px;width:4px;height:4px;background:#93b8bf"></div><div class="abs" style="left:75px;top:361px;width:4px;height:4px;background:#a9cbd2"></div><div class="abs" style="left:79px;top:361px;width:4px;height:4px;background:#d5dedd"></div><div class="abs" style="left:83px;top:361px;width:4px;height:4px;background:#a3bfc4"></div><div class="abs" style="left:87px;top:361px;width:4px;height:4px;background:#aec7ca"></div><div class="abs" style="left:91px;top:361px;width:4px;height:4px;background:#dcebf0"></div><div class="abs" style="left:43px;top:365px;width:4px;height:4px;background:#d5dedd"></div><div class="abs" style="left:47px;top:365px;width:4px;height:4px;background:#d5dedd"></div><div class="abs" style="left:51px;top:365px;width:4px;height:4px;background:#d5dedd"></div><div class="abs" style="left:55px;top:365px;width:4px;height:4px;background:#dde9ed"></div><div class="abs" style="left:59px;top:365px;width:4px;height:4px;background:#d5dedd"></div><div class="abs" style="left:63px;top:365px;width:4px;height:4px;background:#a3bfc4"></div><div class="abs" style="left:67px;top:365px;width:4px;height:4px;background:#eef5f7"></div><div class="abs" style="left:71px;top:365px;width:4px;height:4px;background:#a3bfc4"></div><div class="abs" style="left:75px;top:365px;width:4px;height:4px;background:#a9cbd2"></div><div class="abs" style="left:79px;top:365px;width:4px;height:4px;background:#d5dedd"></div><div class="abs" style="left:83px;top:365px;width:4px;height:4px;background:#cfe0e3"></div><div class="abs" style="left:87px;top:365px;width:4px;height:4px;background:#d5dedd"></div><div class="abs" style="left:91px;top:365px;width:4px;height:4px;background:#a3bfc4"></div></div>
<div class="abs" style="left:43px;top:387px;width:87px;height:1px;background:#f9f9f9"></div>
<div class="cell" style="left:154px;top:358px">T00005</div>
<div class="cell" style="left:262px;top:358px">工程部</div>
<div class="cell" style="left:370px;top:358px">設計師</div>
<div class="cell" style="left:478px;top:358px">2016-08-15</div>
<div class="cell" style="left:586px;top:358px"></div>
<div class="cell" style="left:694px;top:358px">預設考勤組2</div>
<div class="cell" style="left:802px;top:358px">0</div>
<div class="cell" style="left:910px;top:358px">0</div>
<div class="cell" style="left:1008px;width:108px;text-align:center;top:358px">0小時0分鐘</div>
<div class="cell" style="left:1116px;width:108px;text-align:center;top:358px">0小時0分鐘</div>
<div class="abs" style="left:10px;top:397px;width:27px;height:27px;border-radius:50%;background:#e4fbfb;color:#237a8a;font-size:11px;line-height:27px;text-align:center">TC</div>
<div class="abs" style="left:0;top:0;filter:blur(0.35px);opacity:.85"><div class="abs" style="left:41px;top:407px;width:1.5px;height:8px;background:#4f8aa0;opacity:.55"></div><div class="abs" style="left:47px;top:403px;width:4px;height:4px;background:#e9f2f5"></div><div class="abs" style="left:55px;top:403px;width:4px;height:4px;background:#f2f4f3"></div><div class="abs" style="left:59px;top:403px;width:4px;height:4px;background:#dde9ed"></div><div class="abs" style="left:79px;top:403px;width:4px;height:4px;background:#eef5f7"></div><div class="abs" style="left:91px;top:403px;width:4px;height:4px;background:#e1edf1"></div><div class="abs" style="left:43px;top:407px;width:4px;height:4px;background:#9ec3cb"></div><div class="abs" style="left:47px;top:407px;width:4px;height:4px;background:#b6d0d5"></div><div class="abs" style="left:51px;top:407px;width:4px;height:4px;background:#cfe0e3"></div><div class="abs" style="left:55px;top:407px;width:4px;height:4px;background:#dde9ed"></div><div class="abs" style="left:59px;top:407px;width:4px;height:4px;background:#c3d9dd"></div><div class="abs" style="left:63px;top:407px;width:4px;height:4px;background:#cfe0e3"></div><div class="abs" style="left:67px;top:407px;width:4px;height:4px;background:#b6d0d5"></div><div class="abs" style="left:75px;top:407px;width:4px;height:4px;background:#bcd4d8"></div><div class="abs" style="left:79px;top:407px;width:4px;height:4px;background:#b6d0d5"></div><div class="abs" style="left:83px;top:407px;width:4px;height:4px;background:#93b8bf"></div><div class="abs" style="left:87px;top:407px;width:4px;height:4px;background:#c3d9dd"></div><div class="abs" style="left:91px;top:407px;width:4px;height:4px;background:#d5dedd"></div><div class="abs" style="left:95px;top:407px;width:4px;height:4px;background:#c3d9dd"></div><div class="abs" style="left:99px;top:407px;width:4px;height:4px;background:#aec7ca"></div><div class="abs" style="left:43px;top:411px;width:4px;height:4px;background:#c3d9dd"></div><div class="abs" style="left:47px;top:411px;width:4px;height:4px;background:#bcd4d8"></div><div class="abs" style="left:51px;top:411px;width:4px;height:4px;background:#aec7ca"></div><div class="abs" style="left:55px;top:411px;width:4px;height:4px;background:#e1edf1"></div><div class="abs" style="left:59px;top:411px;width:4px;height:4px;background:#aec7ca"></div><div class="abs" style="left:63px;top:411px;width:4px;height:4px;background:#a3bfc4"></div><div class="abs" style="left:67px;top:411px;width:4px;height:4px;background:#aec7ca"></div><div class="abs" style="left:71px;top:411px;width:4px;height:4px;background:#f2f4f3"></div><div class="abs" style="left:75px;top:411px;width:4px;height:4px;background:#93b8bf"></div><div class="abs" style="left:79px;top:411px;width:4px;height:4px;background:#a3bfc4"></div><div class="abs" style="left:83px;top:411px;width:4px;height:4px;background:#c3d9dd"></div><div class="abs" style="left:87px;top:411px;width:4px;height:4px;background:#aec7ca"></div><div class="abs" style="left:91px;top:411px;width:4px;height:4px;background:#d5dedd"></div><div class="abs" style="left:95px;top:411px;width:4px;height:4px;background:#a6cdd8"></div><div class="abs" style="left:99px;top:411px;width:4px;height:4px;background:#9ec3cb"></div><div class="abs" style="left:47px;top:415px;width:4px;height:4px;background:#e6f0f3"></div><div class="abs" style="left:63px;top:415px;width:4px;height:4px;background:#e6f0f3"></div></div>
<div class="abs" style="left:43px;top:433px;width:87px;height:1px;background:#f9f9f9"></div>
<div class="cell" style="left:154px;top:404px">T00006</div>
<div class="cell" style="left:262px;top:404px">工程部</div>
<div class="cell" style="left:370px;top:404px">工程師</div>
<div class="cell" style="left:478px;top:404px">2017-02-27</div>
<div class="cell" style="left:586px;top:404px"></div>
<div class="cell" style="left:694px;top:404px">預設考勤組2</div>
<div class="cell" style="left:802px;top:404px">0</div>
<div class="cell" style="left:910px;top:404px">0</div>
<div class="cell" style="left:1008px;width:108px;text-align:center;top:404px">0小時0分鐘</div>
<div class="cell" style="left:1116px;width:108px;text-align:center;top:404px">0小時0分鐘</div>
<div class="abs" style="left:10px;top:443px;width:27px;height:27px;border-radius:50%;background:#e4fbfb;color:#237a8a;font-size:11px;line-height:27px;text-align:center">CC</div>
<div class="abs" style="left:0;top:0;filter:blur(0.35px);opacity:.85"><div class="abs" style="left:41px;top:453px;width:1.5px;height:8px;background:#4f8aa0;opacity:.55"></div><div class="abs" style="left:47px;top:449px;width:4px;height:4px;background:#dde9ed"></div><div class="abs" style="left:55px;top:449px;width:4px;height:4px;background:#dde9ed"></div><div class="abs" style="left:59px;top:449px;width:4px;height:4px;background:#dde9ed"></div><div class="abs" style="left:71px;top:449px;width:4px;height:4px;background:#e6f0f3"></div><div class="abs" style="left:75px;top:449px;width:4px;height:4px;background:#dde9ed"></div><div class="abs" style="left:95px;top:449px;width:4px;height:4px;background:#e6f0f3"></div><div class="abs" style="left:99px;top:449px;width:4px;height:4px;background:#e1edf1"></div><div class="abs" style="left:103px;top:449px;width:4px;height:4px;background:#dde9ed"></div><div class="abs" style="left:111px;top:449px;width:4px;height:4px;background:#e6f0f3"></div><div class="abs" style="left:43px;top:453px;width:4px;height:4px;background:#bcd4d8"></div><div class="abs" style="left:47px;top:453px;width:4px;height:4px;background:#9ec3cb"></div><div class="abs" style="left:51px;top:453px;width:4px;height:4px;background:#dcebf0"></div><div class="abs" style="left:55px;top:453px;width:4px;height:4px;background:#e6f0f3"></div><div class="abs" style="left:59px;top:453px;width:4px;height:4px;background:#9ec3cb"></div><div class="abs" style="left:63px;top:453px;width:4px;height:4px;background:#cfe0e3"></div><div class="abs" style="left:67px;top:453px;width:4px;height:4px;background:#d5dedd"></div><div class="abs" style="left:71px;top:453px;width:4px;height:4px;background:#dcebf0"></div><div class="abs" style="left:75px;top:453px;width:4px;height:4px;background:#eef5f7"></div><div class="abs" style="left:79px;top:453px;width:4px;height:4px;background:#a3bfc4"></div><div class="abs" style="left:83px;top:453px;width:4px;height:4px;background:#9ec3cb"></div><div class="abs" style="left:87px;top:453px;width:4px;height:4px;background:#a3bfc4"></div><div class="abs" style="left:91px;top:453px;width:4px;height:4px;background:#a3bfc4"></div><div class="abs" style="left:95px;top:453px;width:4px;height:4px;background:#a3bfc4"></div><div class="abs" style="left:99px;top:453px;width:4px;height:4px;background:#93b8bf"></div><div class="abs" style="left:103px;top:453px;width:4px;height:4px;background:#d5dedd"></div><div class="abs" style="left:107px;top:453px;width:4px;height:4px;background:#d5dedd"></div><div class="abs" style="left:111px;top:453px;width:4px;height:4px;background:#bcd4d8"></div><div class="abs" style="left:43px;top:457px;width:4px;height:4px;background:#d5dedd"></div><div class="abs" style="left:47px;top:457px;width:4px;height:4px;background:#cfe0e3"></div><div class="abs" style="left:51px;top:457px;width:4px;height:4px;background:#bcd4d8"></div><div class="abs" style="left:59px;top:457px;width:4px;height:4px;background:#a9cbd2"></div><div class="abs" style="left:63px;top:457px;width:4px;height:4px;background:#dcebf0"></div><div class="abs" style="left:67px;top:457px;width:4px;height:4px;background:#dcebf0"></div><div class="abs" style="left:71px;top:457px;width:4px;height:4px;background:#c3d9dd"></div><div class="abs" style="left:79px;top:457px;width:4px;height:4px;background:#d5dedd"></div><div class="abs" style="left:83px;top:457px;width:4px;height:4px;background:#c3d9dd"></div><div class="abs" style="left:87px;top:457px;width:4px;height:4px;background:#d5dedd"></div><div class="abs" style="left:91px;top:457px;width:4px;height:4px;background:#9ec3cb"></div><div class="abs" style="left:95px;top:457px;width:4px;height:4px;background:#93b8bf"></div><div class="abs" style="left:99px;top:457px;width:4px;height:4px;background:#bcd4d8"></div><div class="abs" style="left:103px;top:457px;width:4px;height:4px;background:#bcd4d8"></div><div class="abs" style="left:107px;top:457px;width:4px;height:4px;background:#aec7ca"></div><div class="abs" style="left:111px;top:457px;width:4px;height:4px;background:#bcd4d8"></div><div class="abs" style="left:63px;top:461px;width:4px;height:4px;background:#e6f0f3"></div><div class="abs" style="left:67px;top:461px;width:4px;height:4px;background:#e1edf1"></div></div>
<div class="abs" style="left:43px;top:479px;width:87px;height:1px;background:#f9f9f9"></div>
<div class="cell" style="left:154px;top:450px">T00007</div>
<div class="cell" style="left:262px;top:450px">工程部</div>
<div class="cell" style="left:370px;top:450px">工程師</div>
<div class="cell" style="left:478px;top:450px">2017-04-03</div>
<div class="cell" style="left:586px;top:450px"></div>
<div class="cell" style="left:694px;top:450px">預設考勤組2</div>
<div class="cell" style="left:802px;top:450px">0</div>
<div class="cell" style="left:910px;top:450px">0</div>
<div class="cell" style="left:1008px;width:108px;text-align:center;top:450px">0小時0分鐘</div>
<div class="cell" style="left:1116px;width:108px;text-align:center;top:450px">0小時0分鐘</div>
</div>
<div class="abs" style="left:1404px;top:270px;width:14px;height:480px;background:#f1f1f1"></div>
<svg class="abs" style="left:1404px;top:270px" width="14" height="14"><path d="M4.5 11h7l-3.5-3.8z" fill="#a3a3a3"/></svg>
<div class="abs" style="left:1406px;top:287px;width:12px;height:271px;background:#c1c1c1"></div>
</body></html>
